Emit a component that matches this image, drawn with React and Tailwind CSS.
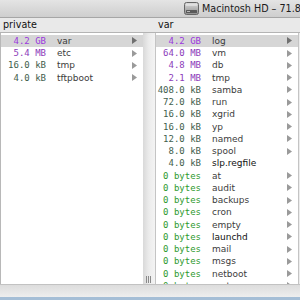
import React from "react";

const GB = "text-[#9a36de]";
const MB = "text-[#8c3cba]";
const KB = "text-[#42604c]";
const BY = "text-[#2e9a2e]";

function colorFor(size) {
  if (size.endsWith("GB")) return GB;
  if (size.endsWith("MB")) return MB;
  if (size.endsWith("kB")) return KB;
  return BY;
}

const left = [
  { s: "4.2 GB", n: "var", sel: true },
  { s: "5.4 MB", n: "etc" },
  { s: "16.0 kB", n: "tmp" },
  { s: "4.0 kB", n: "tftpboot" },
];

const right = [
  { s: "4.2 GB", n: "log", sel: true },
  { s: "64.0 MB", n: "vm" },
  { s: "4.8 MB", n: "db" },
  { s: "2.1 MB", n: "tmp" },
  { s: "408.0 kB", n: "samba" },
  { s: "72.0 kB", n: "run" },
  { s: "16.0 kB", n: "xgrid" },
  { s: "16.0 kB", n: "yp" },
  { s: "12.0 kB", n: "named" },
  { s: "8.0 kB", n: "spool" },
  { s: "4.0 kB", n: "slp.regfile", file: true },
  { s: "0 bytes", n: "at" },
  { s: "0 bytes", n: "audit" },
  { s: "0 bytes", n: "backups" },
  { s: "0 bytes", n: "cron" },
  { s: "0 bytes", n: "empty" },
  { s: "0 bytes", n: "launchd", dark: true },
  { s: "0 bytes", n: "mail" },
  { s: "0 bytes", n: "msgs" },
  { s: "0 bytes", n: "netboot" },
  { s: "0 bytes", n: "root" },
];

function Arrow({ sel }) {
  return (
    <svg width="5" height="7" viewBox="0 0 5 7" className="shrink-0">
      <path d="M0 0 L5 3.5 L0 7 Z" fill={sel ? "#707070" : "#9a9a9a"} />
    </svg>
  );
}

function Row({ r }) {
  return (
    <div
      className={`flex items-center h-[12.25px] shrink-0 ${r.sel ? "bg-[#d6d6d6]" : ""}`}
    >
      <div
        className={`w-[45px] shrink-0 text-right whitespace-pre text-[9px] leading-[12px] ${colorFor(r.s)}`}
        style={{ fontFamily: '"DejaVu Sans Mono", monospace' }}
      >
        {r.s}
      </div>
      <div
        className={`ml-[11px] flex-1 text-[9px] leading-[12px] whitespace-nowrap ${
          r.file || r.dark ? "text-[#111111]" : "text-[#3c3c3c]"
        }`}
        style={{ fontFamily: '"DejaVu Sans", sans-serif' }}
      >
        {r.n}
      </div>
      <div className="w-[11px] shrink-0 flex items-center">
        {!r.file && <Arrow sel={r.sel} />}
      </div>
    </div>
  );
}

function DiskIcon() {
  return (
    <svg width="15" height="13" viewBox="0 0 15 13" className="shrink-0 block">
      <defs>
        <linearGradient id="dk" x1="0" y1="0" x2="0" y2="1">
          <stop offset="0" stopColor="#dcdcdc" />
          <stop offset="1" stopColor="#8e8e8e" />
        </linearGradient>
      </defs>
      <rect x="0.5" y="0.5" width="14" height="12" rx="2" fill="url(#dk)" stroke="#666666" />
      <rect x="2" y="8" width="11" height="3" rx="0.5" fill="#5a5a5a" />
      <rect x="3" y="9" width="3" height="1" fill="#b8b8b8" />
      <line x1="2" y1="3" x2="13" y2="3" stroke="#f0f0f0" />
    </svg>
  );
}

export default function App() {
  return (
    <div
      className="w-[300px] h-[300px] overflow-hidden bg-white flex flex-col"
      style={{ fontFamily: '"DejaVu Sans", sans-serif' }}
    >
      {/* title bar */}
      <div className="h-[18px] shrink-0 bg-gradient-to-b from-[#e4e4e4] to-[#cecece] border-b border-[#a6a6a6] flex items-center pl-[184px] overflow-hidden">
        <DiskIcon />
        <span className="ml-[3px] shrink-0 text-[9.6px] leading-[12px] text-[#1a1a1a] whitespace-nowrap">
          Macintosh HD – 71.8 GB available
        </span>
      </div>
      {/* header */}
      <div className="h-[15px] shrink-0 bg-[#e9e9e9] border-b border-[#b4b4b4] flex items-center text-[9.6px] leading-[12px] text-[#111]">
        <div className="w-[155px] pl-[3px]">private</div>
        <div className="pl-[3px]">var</div>
      </div>
      {/* columns */}
      <div className="flex flex-1 min-h-0">
        <div className="w-[143px] shrink-0 border-l border-[#b8b8b8] flex flex-col overflow-hidden pt-[1.75px]">
          {left.map((r, i) => (
            <Row key={i} r={r} />
          ))}
        </div>
        <div className="w-[13px] shrink-0 bg-gradient-to-r from-[#d9d9d9] via-[#ececec] to-[#f3f3f3] border-r border-[#c4c4c4] flex flex-col justify-end items-start pl-[3px] pb-[1px]">
          <div className="flex gap-[1px] h-[7px]">
            <div className="w-[1px] bg-[#8a8a8a]" />
            <div className="w-[1px] bg-[#8a8a8a]" />
            <div className="w-[1px] bg-[#8a8a8a]" />
          </div>
        </div>
        <div className="w-[142px] shrink-0 flex flex-col overflow-hidden pt-[1.75px]">
          {right.map((r, i) => (
            <Row key={i} r={r} />
          ))}
        </div>
        <div className="flex-1 border-l border-[#c4c4c4] bg-[#ececec]" />
      </div>
      {/* bottom bar */}
      <div className="h-[13px] shrink-0 border-t border-[#c2c2c2] bg-gradient-to-b from-[#dcdcdc] to-[#eeeeee]" />
      <div className="h-[3px] shrink-0 bg-[#a5bed6]" />
    </div>
  );
}
